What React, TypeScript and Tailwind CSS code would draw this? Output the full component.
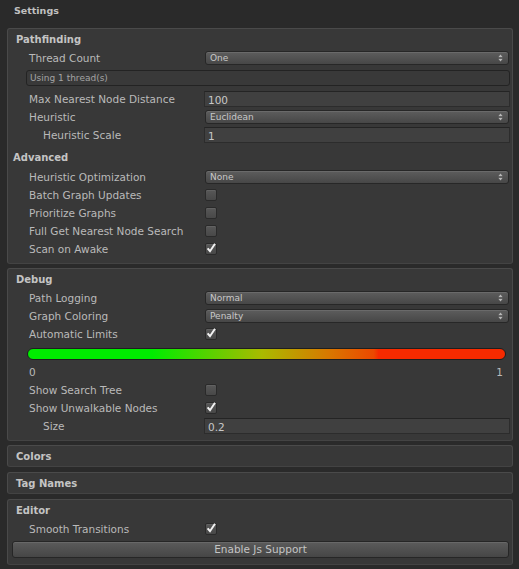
import React from 'react';

const label = "text-[10.5px] text-[#bababa] whitespace-nowrap translate-y-[1px]";

function Arrows() {
  return (
    <svg width="5" height="8" viewBox="0 0 5 8" className="shrink-0">
      <path d="M0.5 3 L2.5 0.6 L4.5 3 Z" fill="#b8b8b8" />
      <path d="M0.5 5 L2.5 7.4 L4.5 5 Z" fill="#b8b8b8" />
      <rect x="0.5" y="3.7" width="4" height="0.6" fill="#8a8a8a" />
    </svg>
  );
}

function Dropdown({ value }: { value: string }) {
  return (
    <div className="h-[14px] rounded-[3px] border border-[#272727] bg-linear-to-b from-[#5d5d5d] to-[#474747] shadow-[inset_0_1px_0_#6a6a6a] flex items-center justify-between pl-[4px] pr-[5px]">
      <span className="text-[9px] leading-none text-[#c8c8c8]">{value}</span>
      <Arrows />
    </div>
  );
}

function Field({ value }: { value: string }) {
  return (
    <div className="-mx-px h-[16px] border border-[#2c2c2c] border-t-[#242424] bg-[#404040] flex items-center pl-[3px]">
      <span className="text-[10.5px] leading-none text-[#c8c8c8] translate-y-[1px]">{value}</span>
    </div>
  );
}

function Check({ on }: { on?: boolean }) {
  return (
    <div className="w-[12px] h-[12px] rounded-[2px] border border-[#2a2a2a] bg-linear-to-b from-[#585858] to-[#484848] shadow-[inset_0_1px_0_#626262] relative">
      {on && (
        <svg width="12" height="12" viewBox="0 0 12 12" className="absolute left-[-1px] top-[-2px]">
          <path d="M2.6 6.4 L5 9.2 L10 1.8" stroke="#f2f2f2" strokeWidth="2" fill="none" strokeLinejoin="miter" />
        </svg>
      )}
    </div>
  );
}

function Row({ name, indent, children }: { name: string; indent?: boolean; children: React.ReactNode }) {
  return (
    <div className="flex h-[18px] items-center pr-[3px]">
      <div className={`w-[197px] shrink-0 ${indent ? 'pl-[35px]' : 'pl-[21px]'} ${label}`}>{name}</div>
      <div className="flex-1">{children}</div>
    </div>
  );
}

function Heading({ text, pl = 'pl-[8px]' }: { text: string; pl?: string }) {
  return (
    <div className={`h-[20px] flex items-center ${pl} text-[10px] font-bold text-[#c4c4c4]`}>{text}</div>
  );
}

function Panel({ className = '', children }: { className?: string; children: React.ReactNode }) {
  return (
    <div className={`mx-[7px] w-[506px] rounded-[3px] border border-[#4a4a4a] border-b-[#434343] bg-[#383838] ${className}`}>
      {children}
    </div>
  );
}

export default function App() {
  return (
    <div className="w-[519px] h-[569px] bg-[#2a2a2a] flex flex-col overflow-hidden font-['DejaVu_Sans',sans-serif]">
      <div className="h-[22px] shrink-0 flex items-center pl-[14px] text-[9.5px] font-bold text-[#c0c0c0]">Settings</div>

      {/* Pathfinding */}
      <Panel className="mt-[6px] pb-[5px]">
        <Heading text="Pathfinding" />
        <Row name="Thread Count"><Dropdown value="One" /></Row>
        <div className="mt-[3px] ml-[18px] mr-[2px] h-[16px] rounded-[3px] border border-[#232323] bg-[#393939] flex items-center pl-[3px]">
          <span className="text-[9px] leading-none text-[#a4a4a4]">Using 1 thread(s)</span>
        </div>
        <div className="h-[4px]" />
        <Row name="Max Nearest Node Distance"><Field value="100" /></Row>
        <Row name="Heuristic"><Dropdown value="Euclidean" /></Row>
        <Row name="Heuristic Scale" indent><Field value="1" /></Row>
        <div className="mt-[4px] mb-[2px] h-[18px] flex items-center pl-[5px] text-[10px] font-bold text-[#c4c4c4]">Advanced</div>
        <Row name="Heuristic Optimization"><Dropdown value="None" /></Row>
        <Row name="Batch Graph Updates"><Check /></Row>
        <Row name="Prioritize Graphs"><Check /></Row>
        <Row name="Full Get Nearest Node Search"><Check /></Row>
        <Row name="Scan on Awake"><Check on /></Row>
      </Panel>

      {/* Debug */}
      <Panel className="mt-[4px] pb-[5px]">
        <Heading text="Debug" />
        <Row name="Path Logging"><Dropdown value="Normal" /></Row>
        <Row name="Graph Coloring"><Dropdown value="Penalty" /></Row>
        <Row name="Automatic Limits"><Check on /></Row>
        <div className="mt-[5px] ml-[19px] mr-[6px] h-[12px] rounded-full border border-[#1e1e1e] bg-[linear-gradient(to_right,#00ec00_0%,#00ec00_26%,#a9ba00_49%,#d87800_63%,#ec4800_72.5%,#f62a00_73.5%,#f62a00_100%)]" />
        <div className="h-[21px] pt-[4px] flex items-center justify-between pl-[21px] pr-[9px] text-[10.5px] text-[#bababa]">
          <span>0</span>
          <span>1</span>
        </div>
        <Row name="Show Search Tree"><Check /></Row>
        <Row name="Show Unwalkable Nodes"><Check on /></Row>
        <Row name="Size" indent><Field value="0.2" /></Row>
      </Panel>

      <Panel className="mt-[4px]">
        <Heading text="Colors" />
      </Panel>

      <Panel className="mt-[5px]">
        <Heading text="Tag Names" />
      </Panel>

      <Panel className="mt-[5px] pb-[6px]">
        <Heading text="Editor" />
        <Row name="Smooth Transitions"><Check on /></Row>
        <div className="mt-[3px] ml-[4px] mr-[3px] h-[17px] rounded-[3px] border border-[#262626] bg-linear-to-b from-[#5b5b5b] to-[#464646] shadow-[inset_0_1px_0_#686868] flex items-center justify-center">
          <span className="text-[10.5px] leading-none text-[#c4c4c4]">Enable Js Support</span>
        </div>
      </Panel>
    </div>
  );
}
